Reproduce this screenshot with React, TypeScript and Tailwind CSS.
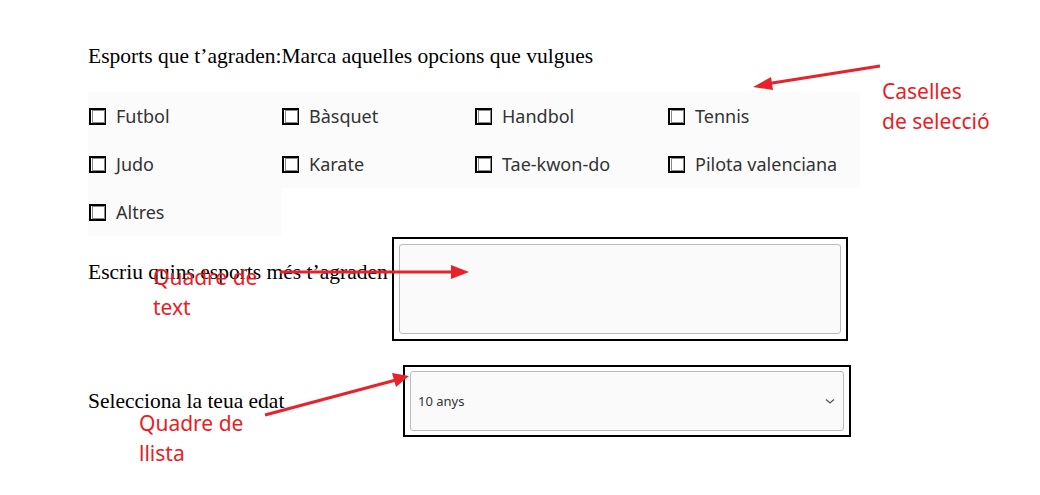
const sports = [
  'Futbol',
  'Bàsquet',
  'Handbol',
  'Tennis',
  'Judo',
  'Karate',
  'Tae-kwon-do',
  'Pilota valenciana',
  'Altres',
]

function Checkbox({ label }: { label: string }) {
  return (
    <label className="flex h-12 items-center gap-[10px] text-[18px] text-[#333]">
      <span className="ml-px flex h-[17px] w-[17px] shrink-0 items-end justify-end border-l-2 border-t-2 border-b-2 border-r border-black bg-white">
        <span className="h-[13px] w-[13px] border border-[#8a8a8a] bg-white" />
      </span>
      <span>{label}</span>
    </label>
  )
}

function Arrows() {
  return (
    <svg className="pointer-events-none absolute inset-0 h-full w-full" viewBox="0 0 1040 495" aria-hidden="true">
      {/* Caselles */}
      <line x1="880" y1="66" x2="766" y2="84" stroke="#e8222b" strokeWidth="3" />
      <polygon points="753,87 771,77 773,90" fill="#e8222b" />
      {/* Quadre de text */}
      <line x1="280" y1="272" x2="455" y2="272" stroke="#e8222b" strokeWidth="3" />
      <polygon points="469,272 451,265 451,279" fill="#e8222b" />
      {/* Quadre de llista */}
      <line x1="265" y1="415" x2="396" y2="380" stroke="#e8222b" strokeWidth="3" />
      <polygon points="409,376 392,373 396,387" fill="#e8222b" />
    </svg>
  )
}

export default function App() {
  return (
    <div className="relative h-[495px] w-full overflow-hidden bg-white">
      <div className="pl-[88px] pt-[43px]">
        {/* Sports checkboxes */}
        <p className="h-[26px] font-['Liberation_Serif',serif] text-[21.5px] leading-[26px] text-black">
          Esports que t’agraden:Marca aquelles opcions que vulgues
        </p>

        <div className="mt-[23px] grid w-[772px] grid-cols-4 font-['Noto_Sans',sans-serif]">
          {sports.map((s) => (
            <div key={s} className="bg-[#fbfbfb]">
              <Checkbox label={s} />
            </div>
          ))}
        </div>

        {/* Textarea */}
        <div className="mt-px flex items-start">
          <p className="mt-[22px] w-[304px] whitespace-nowrap font-['Liberation_Serif',serif] text-[21.5px] leading-[26px] text-black">
            Escriu quins esports més t’agraden
          </p>
          <div className="h-[104px] w-[456px] border-2 border-black p-[5px]">
            <div className="h-full w-full rounded-[3px] border border-[#bcbcbc] bg-[#fafafa]" />
          </div>
        </div>

        {/* Select */}
        <div className="mt-6 flex items-start">
          <p className="mt-[23px] w-[315px] whitespace-nowrap font-['Liberation_Serif',serif] text-[21.5px] leading-[26px] text-black">
            Selecciona la teua edat
          </p>
          <div className="h-[72px] w-[448px] border-2 border-black px-[5px] py-[4px]">
            <div className="flex h-full w-full items-center justify-between rounded-[3px] border border-[#bcbcbc] bg-[#fafafa] pl-[7px] pr-[7px] font-['Noto_Sans',sans-serif] text-[13px] text-[#333]">
              <span className="mt-[2px]">10 anys</span>
              <svg className="h-3 w-3 text-[#555]" viewBox="0 0 12 12" fill="none" stroke="currentColor" strokeWidth="1.3">
                <path d="M2 4.5l4 3.5 4-3.5" />
              </svg>
            </div>
          </div>
        </div>
      </div>

      {/* Annotations */}
      <div className="absolute left-[882px] top-[76px] font-['Noto_Sans',sans-serif] text-[21px] leading-[30px] text-[#ec1c24]">
        Caselles
        <br />
        de selecció
      </div>
      <div className="absolute left-[153px] top-[262px] font-['Noto_Sans',sans-serif] text-[21px] leading-[30px] text-[#ec1c24]">
        Quadre de
        <br />
        text
      </div>
      <div className="absolute left-[139px] top-[408px] font-['Noto_Sans',sans-serif] text-[21px] leading-[30px] text-[#ec1c24]">
        Quadre de
        <br />
        llista
      </div>
      <Arrows />
    </div>
  )
}
